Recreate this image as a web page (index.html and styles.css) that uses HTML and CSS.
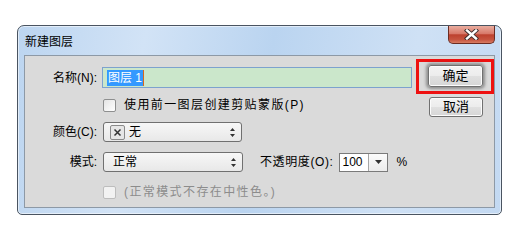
FILE: index.html
```html
<!DOCTYPE html>
<html>
<head>
<meta charset="utf-8">
<title>新建图层</title>
<link rel="stylesheet" href="styles.css">
</head>
<body>
<div class="window">
  <div class="titlebar">
    <span class="title">新建图层</span>
    <div class="close">
      <svg width="15" height="11" viewBox="0 0 15 11">
        <path d="M3 1.5 L12 9.5 M12 1.5 L3 9.5" stroke="#3b2a2a" stroke-width="4.2" stroke-linecap="square" fill="none"/>
        <path d="M3 1.5 L12 9.5 M12 1.5 L3 9.5" stroke="#ffffff" stroke-width="2.4" stroke-linecap="square" fill="none"/>
      </svg>
    </div>
  </div>
  <div class="client">
    <div class="form">
      <div class="row r1">
        <span class="lbl">名称(N):</span>
        <div class="textbox"><span class="sel">图层 1</span><span class="caret"></span></div>
      </div>
      <div class="row r2">
        <span class="lbl"></span>
        <span class="check"></span>
        <span class="ctext">使用前一图层创建剪贴蒙版(P)</span>
      </div>
      <div class="row r3">
        <span class="lbl">颜色(C):</span>
        <div class="select color">
          <span class="swatch">
            <svg width="9" height="9" viewBox="0 0 9 9"><path d="M1.5 1.5 L7.5 7.5 M7.5 1.5 L1.5 7.5" stroke="#333" stroke-width="1.5" fill="none"/></svg>
          </span>
          <span class="opt">无</span>
          <svg class="updown" width="5" height="9" viewBox="0 0 5 9"><path d="M2.5 0 L5 3 L0 3 Z M0 6 L5 6 L2.5 9 Z" fill="#333"/></svg>
        </div>
      </div>
      <div class="row r4">
        <span class="lbl">模式:</span>
        <div class="select mode">
          <span class="opt">正常</span>
          <svg class="updown" width="5" height="9" viewBox="0 0 5 9"><path d="M2.5 0 L5 3 L0 3 Z M0 6 L5 6 L2.5 9 Z" fill="#333"/></svg>
        </div>
        <span class="oplbl">不透明度(O):</span>
        <div class="spin">
          <span class="val">100</span>
          <span class="drop"><svg width="7" height="4" viewBox="0 0 7 4"><path d="M0 0 L7 0 L3.5 4 Z" fill="#333"/></svg></span>
        </div>
        <span class="pct">%</span>
      </div>
      <div class="row r5">
        <span class="lbl"></span>
        <span class="check disabled"></span>
        <span class="ctext dim">(正常模式不存在中性色。)</span>
      </div>
    </div>
    <div class="side">
      <div class="highlight"><button class="btn ok">确定</button></div>
      <button class="btn cancel">取消</button>
    </div>
  </div>
</div>
</body>
</html>
```

FILE: styles.css
```css
body {
  margin: 0;
  background: #ffffff;
  font-family: "Liberation Sans", "Noto Sans CJK SC", sans-serif;
  font-size: 12px;
  line-height: 14px;
  color: #000;
}

.window {
  box-sizing: border-box;
  width: 485px;
  height: 190px;
  margin: 25px 0 0 17px;
  border: 1px solid #4a5461;
  border-radius: 7px 7px 5px 5px;
  padding: 0 6px 6px;
  background: linear-gradient(100deg, #bcd5f0 0%, #d2e3f6 25%, #bad4f0 50%, #cfe1f5 78%, #c3d9f2 100%);
  box-shadow: inset 0 0 0 1px rgba(255, 255, 255, 0.55);
  display: flex;
  flex-direction: column;
}

.titlebar {
  height: 29px;
  display: flex;
  align-items: flex-start;
  justify-content: space-between;
}

.title {
  margin-top: 9px;
  margin-left: 1px;
}

.close {
  box-sizing: border-box;
  width: 47px;
  height: 18px;
  border: 1px solid #6b2c22;
  border-top: none;
  border-radius: 0 0 5px 5px;
  background: linear-gradient(#e9ad9f 0%, #d8796a 45%, #bd412f 52%, #c6543f 80%, #d87c62 100%);
  display: flex;
  align-items: center;
  justify-content: center;
}

.close svg { display: block; }

.client {
  box-sizing: border-box;
  height: 153px;
  border: 1px solid #8d99a6;
  background: #dadada;
  display: flex;
}

.form { width: 391px; }

.row {
  display: flex;
  align-items: center;
}

.lbl {
  width: 72px;
  flex: none;
  text-align: right;
}

.r1 { margin-top: 11px; height: 21px; }
.r2 { margin-top: 10px; height: 14px; }
.r3 { margin-top: 10px; height: 20px; }
.r4 { margin-top: 10px; height: 20px; }
.r5 { margin-top: 13px; height: 14px; }

.textbox {
  box-sizing: border-box;
  margin-left: 5px;
  width: 310px;
  height: 21px;
  border: 1px solid #7da2ce;
  background: #cbe7cb;
  display: flex;
  align-items: center;
  padding-left: 4px;
}

.sel {
  background: #3399ff;
  color: #fff;
  line-height: 16px;
  padding: 0 1px;
}

.caret {
  width: 1px;
  height: 16px;
  background: #d9681e;
}

.check {
  box-sizing: border-box;
  width: 13px;
  height: 13px;
  margin-left: 6px;
  border: 1px solid #8e8f8f;
  border-radius: 2px;
  background: linear-gradient(135deg, #e4e4e4, #ffffff);
  flex: none;
}

.check.disabled {
  border-color: #bdbdbd;
  background: #f2f2f2;
}

.ctext {
  margin-left: 8px;
  letter-spacing: 1.4px;
}

.dim { color: #8c8c8c; }

.select {
  box-sizing: border-box;
  margin-left: 6px;
  height: 20px;
  border: 1px solid #707070;
  border-radius: 3px;
  background: linear-gradient(#f7f7f7, #e8e8e8);
  display: flex;
  align-items: center;
}

.color { width: 139px; padding-left: 6px; }
.mode { width: 140px; padding-left: 9px; }

.swatch {
  box-sizing: border-box;
  width: 15px;
  height: 15px;
  border: 1px solid #8a8a8a;
  border-radius: 2px;
  background: #e6e6e6;
  display: flex;
  align-items: center;
  justify-content: center;
}

.swatch + .opt { margin-left: 4px; }

.updown {
  margin-left: auto;
  margin-right: 6px;
}

.oplbl {
  margin-left: 17px;
  letter-spacing: 0.6px;
}

.spin {
  box-sizing: border-box;
  margin-left: 6px;
  width: 49px;
  height: 19px;
  border: 1px solid #7a7a7a;
  background: #fff;
  display: flex;
}

.val {
  width: 26px;
  padding-left: 2px;
  line-height: 17px;
}

.drop {
  flex: 1;
  border-left: 1px solid #a5a5a5;
  background: linear-gradient(#fbfbfb, #ececec);
  display: flex;
  align-items: center;
  justify-content: center;
}

.pct { margin-left: 8px; }

.side {
  display: flex;
  flex-direction: column;
  align-items: flex-start;
}

.highlight {
  box-sizing: border-box;
  width: 78px;
  height: 35px;
  margin-top: 3px;
  border: 3px solid #ee1111;
  padding: 3px 0 0 9px;
}

.btn {
  box-sizing: border-box;
  display: block;
  padding: 0;
  font: inherit;
  font-size: 13px;
  color: #000;
  border: 1px solid #707070;
  border-radius: 3px;
  background: linear-gradient(#f3f3f3 0%, #ececec 50%, #e0e0e0 51%, #d6d6d6 100%);
  box-shadow: inset 0 0 0 1px #fcfcfc;
}

.ok {
  width: 55px;
  height: 22px;
  box-shadow: inset 0 0 0 1px #fcfcfc, 0 0 3px 2px rgba(70, 70, 70, 0.5);
}

.cancel {
  width: 54px;
  height: 20px;
  margin: 3px 0 0 13px;
}
```
